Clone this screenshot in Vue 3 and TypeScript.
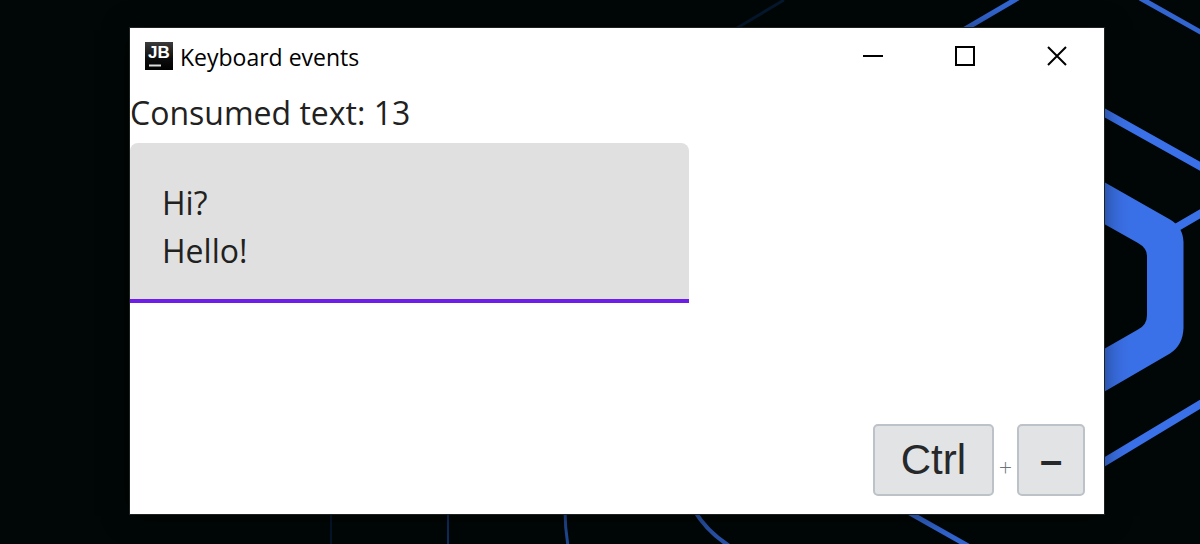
<script setup lang="ts">
import { computed, ref } from 'vue'

const title = 'Keyboard events'
const consumed = ref<number>(13)
const text = ref<string>('Hi?\nHello!')
const shortcut: string[] = ['Ctrl', '–']
const label = computed<string>(() => `Consumed text: ${consumed.value}`)
</script>

<template>
  <div class="desktop">
    <svg class="wallpaper" viewBox="0 0 1200 544" preserveAspectRatio="xMaxYMid slice" fill="none" aria-hidden="true">
      <path d="M737 28L784 0" stroke="#05182e" stroke-width="3" />
      <path d="M331 510V544" stroke="#04152a" stroke-width="2" />
      <path d="M448 510V544" stroke="#0f2b5c" stroke-width="2" />
      <path d="M565 510Q565 528 568 546" stroke="#1f478f" stroke-width="3" />
      <path d="M694 510Q707 532 731 547" stroke="#2851a6" stroke-width="4" />
      <path d="M901 508L970 547" stroke="#3265d0" stroke-width="5" />
      <path d="M960 32L1018 -2M1140 -2L1204 34" stroke="#3265d0" stroke-width="5" />
      <path d="M1096 108L1204 168.500M1174 229L1204 211.500M1096 467L1204 402" stroke="#3b71e8" stroke-width="8" />
      <path
        fill="#3b71e8"
        fill-rule="evenodd"
        d="M1090 174L1170 219.500Q1183 227 1183.500 242V328Q1183 345 1170 353.500L1090 400V357L1138 329.500Q1147 325 1147 315V256Q1147 248 1138 243L1090 216Z"
      />
    </svg>

    <main class="window">
      <header class="titlebar">
        <svg class="logo" viewBox="0 0 28 28" aria-hidden="true">
          <defs>
            <linearGradient id="logo-fill" x1="0" y1="0" x2="0" y2="1">
              <stop offset="0" stop-color="#3c3c3c" />
              <stop offset="0.6" stop-color="#0c0c0c" />
              <stop offset="1" stop-color="#000" />
            </linearGradient>
          </defs>
          <rect width="28" height="28" fill="url(#logo-fill)" />
          <text class="logo-text" x="3" y="16">JB</text>
          <path d="M4 23.500H16" stroke="#ddd" stroke-width="2" />
        </svg>
        <h1 class="title">{{ title }}</h1>
        <div class="controls">
          <button type="button" class="control" aria-label="Minimize">
            <svg viewBox="0 0 22 22"><path d="M1 11H21" /></svg>
          </button>
          <button type="button" class="control" aria-label="Maximize">
            <svg viewBox="0 0 22 22"><rect x="2" y="2" width="18" height="18" /></svg>
          </button>
          <button type="button" class="control close" aria-label="Close">
            <svg viewBox="0 0 22 22"><path d="M2 2L20 20M20 2L2 20" /></svg>
          </button>
        </div>
      </header>

      <section class="content">
        <label class="label" for="message">{{ label }}</label>
        <textarea id="message" v-model="text" class="field" rows="2" spellcheck="false"></textarea>
      </section>

      <footer class="shortcut">
        <template v-for="(key, i) in shortcut" :key="key">
          <span v-if="i > 0" class="plus">+</span>
          <kbd class="key" :class="{ symbol: key.length === 1 }">{{ key }}</kbd>
        </template>
      </footer>
    </main>
  </div>
</template>

<style>
body {
  margin: 0;
  background: #000706;
}
</style>

<style scoped>
.desktop {
  position: relative;
  display: flex;
  box-sizing: border-box;
  min-height: 100vh;
  padding: 28px 96px 30px 130px;
  overflow: hidden;
  background: #000706;
  font-family: "Open Sans", "Noto Sans", sans-serif;
}

.wallpaper {
  position: absolute;
  inset: 0;
  width: 100%;
  height: 100%;
}

.window {
  position: relative;
  display: flex;
  flex: 1;
  flex-direction: column;
  min-width: 0;
  background: #fff;
  box-shadow: 0 0 0 1px #1c2322, 0 2px 24px rgba(0, 0, 0, 0.5);
}

.titlebar {
  display: flex;
  align-items: center;
  height: 56px;
  padding: 0 1px 0 15px;
}

.logo {
  width: 28px;
  height: 28px;
}

.logo-text {
  fill: #fff;
  font: bold 17px "Liberation Sans", Arial, sans-serif;
}

.title {
  flex: 1;
  margin: 2px 0 0 7px;
  color: #000;
  font-size: 23px;
  font-weight: 400;
  line-height: 32px;
}

.controls {
  display: flex;
  align-self: stretch;
}

.control {
  display: flex;
  align-items: center;
  justify-content: center;
  width: 92px;
  padding: 0;
  border: 0;
  background: none;
}

.control svg {
  width: 22px;
  height: 22px;
  fill: none;
  stroke: #000;
  stroke-width: 2;
}

.content {
  display: flex;
  flex-direction: column;
  align-items: flex-start;
}

.label {
  padding: 5px 0 6px;
  color: #212121;
  font-size: 32px;
  line-height: 48px;
}

.field {
  box-sizing: border-box;
  width: 559px;
  max-width: 100%;
  height: 160px;
  padding: 36px 32px 24px;
  overflow: hidden;
  border: 0;
  border-bottom: 4px solid #6f1de8;
  border-radius: 8px 8px 0 0;
  outline: 0;
  background: #e0e0e0;
  color: #212121;
  font: inherit;
  font-size: 32px;
  line-height: 48px;
  resize: none;
}

.shortcut {
  display: flex;
  align-items: center;
  justify-content: flex-end;
  margin-top: auto;
  padding: 0 19px 18px 0;
  font-family: "Liberation Sans", Arial, sans-serif;
}

.key {
  box-sizing: border-box;
  min-width: 68px;
  padding: 0 26px;
  border: 2px solid #bcc2c7;
  border-radius: 5px;
  background: #e1e3e5;
  color: #27282a;
  font-family: inherit;
  font-size: 42px;
  line-height: 68px;
  text-align: center;
}

.key.symbol {
  padding: 0 18px;
  font-size: 40px;
  font-weight: 700;
}

.plus {
  width: 23px;
  padding-top: 12px;
  color: #6a737b;
  font-family: Lato, sans-serif;
  font-size: 23px;
  font-weight: 300;
  line-height: 24px;
  text-align: center;
}
</style>
